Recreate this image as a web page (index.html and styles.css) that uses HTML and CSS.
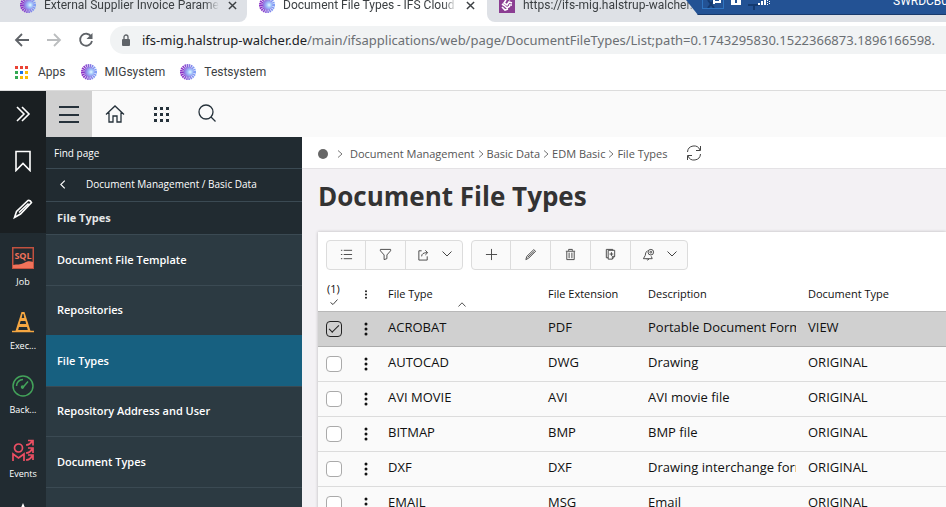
FILE: index.html
```html
<!DOCTYPE html>
<html lang="en">
<head>
  <meta charset="UTF-8">
  <meta name="viewport" content="width=device-width,initial-scale=1">
  <title>Document File Types - IFS Cloud</title>
  <link rel="stylesheet" href="styles.css">
</head>
<body>

  <!-- shared icons -->
  <svg class="sprite" aria-hidden="true">
    <defs>
      <linearGradient id="burst" x1="0" y1="0" x2="1" y2="0">
        <stop offset="0" stop-color="#8a2fc4"/>
        <stop offset="1" stop-color="#7f9df5"/>
      </linearGradient>
      <radialGradient id="core" cx=".65" cy=".5" r=".6">
        <stop offset="0" stop-color="#e4fbff"/>
        <stop offset=".4" stop-color="#a0c4fb"/>
        <stop offset="1" stop-color="#8f6fe0"/>
      </radialGradient>
    </defs>
    <symbol id="i-ifs" viewBox="0 0 16 16">
      <circle cx="8" cy="8" r="6" fill="none" stroke="url(#burst)" stroke-width="4" stroke-dasharray="1.35 .535"/>
      <circle cx="8.6" cy="8" r="5" fill="url(#core)"/>
    </symbol>
    <symbol id="i-x" viewBox="0 0 10 10"><path d="M1 1l8 8M9 1L1 9"/></symbol>
    <symbol id="i-down" viewBox="0 0 10 6"><path d="M.5 .5L5 5L9.500 .5"/></symbol>
    <symbol id="i-sep" viewBox="0 0 6 8"><path d="M1 .5L5 4L1 7.500"/></symbol>
    <symbol id="i-dots" viewBox="0 0 4 14">
      <circle cx="2" cy="2" r="1.500"/><circle cx="2" cy="7" r="1.500"/><circle cx="2" cy="12" r="1.500"/>
    </symbol>
  </svg>

  <div class="browser">
    <div class="tabs">
      <div class="tab tab-first">
        <svg class="fav"><use href="#i-ifs"/></svg>
        <span class="tab-title">External Supplier Invoice Parameters</span>
        <button class="tab-close" aria-label="Close tab"><svg><use href="#i-x"/></svg></button>
      </div>
      <div class="tab tab-active">
        <svg class="fav"><use href="#i-ifs"/></svg>
        <span class="tab-title">Document File Types - IFS Cloud</span>
        <button class="tab-close" aria-label="Close tab"><svg><use href="#i-x"/></svg></button>
      </div>
      <div class="tab tab-last">
        <svg class="fav" viewBox="0 0 16 16">
          <rect width="16" height="16" fill="#8b3d92"/>
          <path d="M7 3l-2 3 3 2 2-3 3 1M3 7l3 2 2 2 3-2M3 10l3 3 3-1M10 3l3-2M10 8l3 0" fill="none" stroke="#fff" stroke-width="1.600"/>
        </svg>
        <span class="tab-title">https://ifs-mig.halstrup-walcher.de</span>
      </div>
    </div>

    <div class="address-row">
      <button aria-label="Back"><svg viewBox="0 0 16 16"><path d="M15 8H2M8 2L2 8l6 6"/></svg></button>
      <button class="disabled" aria-label="Forward"><svg viewBox="0 0 16 16"><path d="M1 8h13M8 2l6 6-6 6"/></svg></button>
      <button aria-label="Reload"><svg viewBox="0 0 16 16"><path d="M13.200 4.500A6 6 0 1 0 14 9"/><path d="M14.500 1v6h-6z" fill="#5f6368" stroke="none"/></svg></button>
      <div class="address">
        <svg class="lock" viewBox="0 0 10 12"><rect x="1" y="5" width="8" height="7" rx="1"/><path d="M3 5V3a2 2 0 0 1 4 0v2" fill="none" stroke="#5f6368" stroke-width="1.300"/></svg>
        <span class="url"><b>ifs-mig.halstrup-walcher.de</b>/main/ifsapplications/web/page/DocumentFileTypes/List;path=0.1743295830.1522366873.1896166598.</span>
      </div>
    </div>

    <nav class="bookmarks">
      <a href="#">
        <svg class="apps" viewBox="0 0 13 13">
          <path fill="#ea4335" d="M0 0h3v3H0zM5 0h3v3H5zM10 0h3v3h-3z"/>
          <path fill="#34a853" d="M0 5h3v3H0zM0 10h3v3H0z"/>
          <path fill="#1a73e8" d="M5 5h3v3H5z"/>
          <path fill="#fbbc05" d="M10 5h3v3h-3zM5 10h3v3H5zM10 10h3v3h-3z"/>
        </svg>Apps</a>
      <a href="#"><svg class="fav"><use href="#i-ifs"/></svg>MIGsystem</a>
      <a href="#"><svg class="fav"><use href="#i-ifs"/></svg>Testsystem</a>
    </nav>

    <!-- remote session bar over the tab strip -->
    <div class="session">
      <span class="session-pin"><svg viewBox="0 0 20 8"><path d="M5 0l6 8M11 0L5 8" stroke="#143a70" stroke-width="2"/><path d="M11 0v4M11 2h6V0" fill="none" stroke="#fff" stroke-width="2"/></svg></span>
      <svg class="session-lock" viewBox="0 0 10 5"><path d="M0 0h10v5H0z" fill="#fff"/><path d="M4 0h2v3H4z" fill="#235294"/></svg>
      <svg class="session-signal" viewBox="0 0 22 10"><path d="M0 4h12v2H7v4H5V6H0z" fill="#143a70"/><path d="M10 3h2v2h-2zM13 1h2v4h-2zM16 0h2v5h-2zM19 0h1v1h-1zM19 2h1v1h-1zM19 4h1v1h-1zM21 1h1v1h-1zM21 3h1v1h-1z" fill="#fff"/></svg>
      <span class="session-name">SWRDCB01</span>
    </div>
  </div>

  <div class="app">
    <aside class="rail">
      <div class="rail-top">
        <button aria-label="Expand"><svg viewBox="0 0 16 16"><path d="M2 1l7 7-7 7M7 1l7 7-7 7"/></svg></button>
        <button aria-label="Bookmarks"><svg class="tall" viewBox="0 0 18 22"><path d="M2 1.500h14v19l-7-7-7 7z"/></svg></button>
        <button aria-label="Edit"><svg class="tall" viewBox="0 0 20 20"><path d="M1.500 18.500l2-6L15 1.500q2.500-.5 3.500 2L7.500 15zM6 13.500L15.500 4.500"/></svg></button>
      </div>
      <a class="rail-link" href="#">
        <svg viewBox="0 0 22 22"><rect x=".75" y=".75" width="20.500" height="20.500" fill="none" stroke="#c2513f" stroke-width="1.500"/><path d="M1 21v-3c4-1 7 0 11-2 3-2 6-2 9-1v6z" fill="#f0725a"/><text x="11" y="12" text-anchor="middle" class="sql">SQL</text></svg>
        Job</a>
      <a class="rail-link" href="#">
        <svg viewBox="0 0 22 22"><path d="M9.500 1h3l6 19h-15z" fill="#f5a742"/><path d="M0 20.500h22" stroke="#f5a742" stroke-width="1.500"/><path d="M10.500 3h1l.8 4H9.700zM8.600 10h4.800l.8 3H7.800zM7 16h8l.8 3H6.200z" fill="#212b31"/></svg>
        Exec...</a>
      <a class="rail-link" href="#">
        <svg viewBox="0 0 22 22" fill="none" stroke="#43a35a" stroke-width="1.500"><circle cx="11" cy="11" r="10"/><path d="M4.500 11A6.500 6.500 0 0 1 11 4.500M10 13.500L16 6.500"/><circle cx="10.500" cy="12" r="1"/></svg>
        Back...</a>
      <a class="rail-link" href="#">
        <svg viewBox="0 0 22 22" fill="none" stroke="#ec4f63" stroke-width="1.700"><circle cx="6.500" cy="9" r="4"/><path d="M1 22v-7l5.500 4 5.500-4v7M14 6q4 0 6-4M16 1.500h5v5M14 14q4 0 6-4M16 9h5v5M14 21q4 0 6-4M16 16h5v5"/></svg>
        Events</a>
      <a class="rail-link" href="#" aria-label="Favourites">
        <svg viewBox="0 0 22 22"><path d="M11 0l3 7 8 1-6 5 2 8-7-4-7 4 2-8-6-5 8-1z" fill="#fff"/></svg></a>
    </aside>

    <div class="workspace">
      <header class="topbar">
        <button class="pressed" aria-label="Menu"><svg viewBox="0 0 20 20"><path d="M0 3h20M0 11h20M0 18h20" stroke-width="2"/></svg></button>
        <button aria-label="Home"><svg viewBox="0 0 20 20"><path d="M1 10.500L10 2l9 8.500M4 8.500V18h4v-6h4v6h4V8.500"/></svg></button>
        <button aria-label="Applications"><svg viewBox="0 0 20 20"><path d="M2 2h4v4H2zM8 2h4v4H8zM14 2h4v4h-4zM2 8h4v4H2zM8 8h4v4H8zM14 8h4v4h-4zM2 14h4v4H2zM8 14h4v4H8zM14 14h4v4h-4z" transform="translate(.5 .5)" fill="#26323b" stroke="#fafafa" stroke-width="1"/></svg></button>
        <button aria-label="Search"><svg viewBox="0 0 20 20"><circle cx="9" cy="8" r="7"/><path d="M14 13l4.500 4.500"/></svg></button>
      </header>

      <div class="columns">
        <nav class="menu">
          <input class="find" type="text" placeholder="Find page" aria-label="Find page">
          <a class="menu-back" href="#"><svg viewBox="0 0 6 8"><path d="M5 .5L1.500 4L5 7.500"/></svg>Document Management / Basic Data</a>
          <h2>File Types</h2>
          <a class="menu-item" href="#">Document File Template</a>
          <a class="menu-item" href="#">Repositories</a>
          <a class="menu-item current" href="#">File Types</a>
          <a class="menu-item" href="#">Repository Address and User</a>
          <a class="menu-item" href="#">Document Types</a>
          <a class="menu-item" href="#"></a>
        </nav>

        <main>
          <div class="crumbs">
            <span class="root"></span>
            <svg class="sep"><use href="#i-sep"/></svg>
            <a class="first" href="#">Document Management</a>
            <svg class="sep"><use href="#i-sep"/></svg>
            <a href="#">Basic Data</a>
            <svg class="sep"><use href="#i-sep"/></svg>
            <a href="#">EDM Basic</a>
            <svg class="sep"><use href="#i-sep"/></svg>
            <a href="#">File Types</a>
            <button class="refresh" aria-label="Refresh"><svg viewBox="0 0 16 16"><path d="M1.500 7A6.500 6.500 0 0 1 14 5M14.500 1v4.500H10M14.500 9A6.500 6.500 0 0 1 2 11M1.500 15v-4.500H6"/></svg></button>
          </div>

          <h1>Document File Types</h1>

          <section class="card">
            <div class="toolbar">
              <div class="group">
                <button aria-label="List"><svg viewBox="0 0 14 14"><path d="M4 2.500h9M4 7h9M4 11.500h9M1 2.500h1.500M1 7h1.500M1 11.500h1.500"/></svg></button>
                <button aria-label="Filter"><svg viewBox="0 0 14 14"><path d="M1.500 1.500h11v1.500L8.500 7.500v4l-3 1v-5L1.500 3z"/></svg></button>
                <button class="wide" aria-label="Export"><svg viewBox="0 0 14 14"><path d="M5 3H2v10h9V9M5 9q0-4 6-4M9 2.500L11.500 5L9 7.500"/></svg><svg class="down"><use href="#i-down"/></svg></button>
              </div>
              <div class="group">
                <button aria-label="New"><svg viewBox="0 0 14 14"><path d="M7 1v12M1 7h12"/></svg></button>
                <button aria-label="Edit"><svg viewBox="0 0 14 14"><path d="M2 12.500l1-3.500 7.500-7.200 2 1.700L5 11zM4 10L11 3.500"/></svg></button>
                <button aria-label="Delete"><svg viewBox="0 0 14 14"><path d="M2 3.500h10M5 3V1.500h4V3M3 4v8.500h8V4M5.500 5v6M8.500 5v6"/></svg></button>
                <button aria-label="Duplicate"><svg viewBox="0 0 14 14"><path d="M4.500 2.500h7V9L9 12H4.500zM9 12V9h2.500M4.500 10.500H2.500v-9h7v1M8 4.500v4M6 6.500h4"/></svg></button>
                <button class="wide" aria-label="Notifications"><svg viewBox="0 0 14 14"><path d="M6 3Q3.500 4 3.500 8L1.500 11.500h9.500L10 9M5 12q1 2 2.500 0"/><circle cx="9.500" cy="4.500" r="3"/><circle cx="9.500" cy="4.500" r="1"/></svg><svg class="down"><use href="#i-down"/></svg></button>
              </div>
            </div>

            <table>
              <colgroup>
                <col class="c-check"><col class="c-dots"><col class="c-type"><col class="c-ext"><col class="c-desc"><col>
              </colgroup>
              <thead>
                <tr>
                  <th class="count">(1)<svg viewBox="0 0 8 6"><path d="M.5 3.500L3 5.500L7.500 .5"/></svg></th>
                  <th class="dots small"><svg><use href="#i-dots"/></svg></th>
                  <th class="sorted">File Type<svg viewBox="0 0 8 5"><path d="M.5 4.500L4 .8L7.500 4.500"/></svg></th>
                  <th>File Extension</th>
                  <th>Description</th>
                  <th>Document Type</th>
                </tr>
              </thead>
              <tbody>
                <tr class="selected">
                  <td><input type="checkbox" checked aria-label="Select ACROBAT"></td>
                  <td class="dots"><svg><use href="#i-dots"/></svg></td>
                  <td>ACROBAT</td><td>PDF</td><td><div class="clip">Portable Document Format</div></td><td>VIEW</td>
                </tr>
                <tr>
                  <td><input type="checkbox" aria-label="Select AUTOCAD"></td>
                  <td class="dots"><svg><use href="#i-dots"/></svg></td>
                  <td>AUTOCAD</td><td>DWG</td><td><div class="clip">Drawing</div></td><td>ORIGINAL</td>
                </tr>
                <tr>
                  <td><input type="checkbox" aria-label="Select AVI MOVIE"></td>
                  <td class="dots"><svg><use href="#i-dots"/></svg></td>
                  <td>AVI MOVIE</td><td>AVI</td><td><div class="clip">AVI movie file</div></td><td>ORIGINAL</td>
                </tr>
                <tr>
                  <td><input type="checkbox" aria-label="Select BITMAP"></td>
                  <td class="dots"><svg><use href="#i-dots"/></svg></td>
                  <td>BITMAP</td><td>BMP</td><td><div class="clip">BMP file</div></td><td>ORIGINAL</td>
                </tr>
                <tr>
                  <td><input type="checkbox" aria-label="Select DXF"></td>
                  <td class="dots"><svg><use href="#i-dots"/></svg></td>
                  <td>DXF</td><td>DXF</td><td><div class="clip">Drawing interchange format</div></td><td>ORIGINAL</td>
                </tr>
                <tr>
                  <td><input type="checkbox" aria-label="Select EMAIL"></td>
                  <td class="dots"><svg><use href="#i-dots"/></svg></td>
                  <td>EMAIL</td><td>MSG</td><td><div class="clip">Email</div></td><td>ORIGINAL</td>
                </tr>
              </tbody>
            </table>
          </section>
        </main>
      </div>
    </div>
  </div>

</body>
</html>
```
FILE: styles.css
```css
:root {
  --ink: #26323b;
  --rail: #212b31;
  --rail-dark: #1a1f22;
  --menu: #2c3a42;
  --menu-line: #3b4a53;
  --active: #176080;
  --line: #dcdcdc;
  --chrome: #dee1e6;
}
*, *::before, *::after { box-sizing: border-box; }
body {
  margin: 0;
  height: 100vh;
  display: flex;
  flex-direction: column;
  overflow: hidden;
  font-family: "Open Sans", "Noto Sans", sans-serif;
  font-size: 13px;
  color: #111;
  background: #fff;
}
button {
  padding: 0;
  border: none;
  background: none;
  color: inherit;
  font: inherit;
  display: flex;
  align-items: center;
  justify-content: center;
  cursor: pointer;
}
a { color: inherit; text-decoration: none; }
svg { display: block; flex: none; }
.sprite { position: absolute; width: 0; height: 0; }
.fav { width: 16px; height: 16px; }

/* Browser window */
.browser {
  flex: none;
  position: relative;
  border-bottom: 1px solid var(--line);
  font-family: Roboto, "Noto Sans", sans-serif;
  font-size: 12px;
  color: #3c4043;
}
.tabs {
  display: flex;
  align-items: flex-end;
  height: 22px;
  overflow: hidden;
}
.tab {
  display: flex;
  align-items: center;
  gap: 8px;
  flex: none;
  width: 240px;
  height: 34px;
  padding: 0 12px;
  background: var(--chrome);
}
.tab-first { width: 247px; padding: 0 10px 0 20px; border-radius: 0 0 8px 0; }
.tab-active { background: #fff; }
.tab-last { flex: 1; border-radius: 0 0 0 8px; }
.tab-title {
  flex: 1;
  max-width: 176px;
  overflow: hidden;
  white-space: nowrap;
  -webkit-mask-image: linear-gradient(90deg, #000 92%, transparent);
  mask-image: linear-gradient(90deg, #000 92%, transparent);
}
.tab-close { width: 10px; height: 16px; }
.tab-close svg { width: 9px; height: 9px; stroke: #3c4043; stroke-width: 1.600; }

.address-row {
  display: flex;
  align-items: center;
  gap: 16px;
  padding: 4px 0 0 14px;
}
.address-row button { width: 16px; height: 28px; }
.address-row button svg { width: 16px; height: 16px; fill: none; stroke: #5f6368; stroke-width: 1.800; }
.address-row .disabled svg { stroke: #bbbdbf; }
.address {
  flex: 1;
  min-width: 0;
  display: flex;
  align-items: center;
  gap: 11px;
  height: 28px;
  padding-left: 11px;
  border-radius: 14px 0 0 14px;
  background: #f1f3f4;
}
.lock { width: 10px; height: 12px; fill: #5f6368; }
.url {
  overflow: hidden;
  white-space: nowrap;
  font-family: "Noto Sans", sans-serif;
  font-size: 13px;
  color: #6b6f73;
}
.url b { font-weight: 400; color: #202124; }

.bookmarks {
  display: flex;
  align-items: center;
  gap: 15px;
  height: 36px;
  padding-left: 15px;
}
.bookmarks a { display: flex; align-items: center; gap: 8px; }
.apps { width: 13px; height: 13px; margin-right: 2px; }

.session {
  position: absolute;
  top: 0;
  right: 0;
  width: 260px;
  height: 15px;
  padding-left: 16px;
  display: flex;
  gap: 7px;
  overflow: hidden;
  background: #235294;
  border-bottom: 1px solid #183a6b;
  clip-path: polygon(0 0, 100% 0, 100% 100%, 12px 100%);
  color: #fff;
}
.session-pin {
  width: 22px;
  height: 9px;
  border: 1px solid #2f74c0;
  border-top: none;
}
.session-pin svg { width: 20px; height: 8px; }
.session-lock { width: 10px; height: 5px; }
.session-signal { width: 22px; height: 10px; }
.session-name { width: 53px; margin: -8px 0 0 auto; line-height: 18px; white-space: nowrap; }

/* Left icon rail */
.app { flex: 1; min-height: 0; display: flex; }
.rail {
  flex: none;
  width: 46px;
  overflow: hidden;
  background: var(--rail);
  color: #fff;
}
.rail-top { background: var(--rail-dark); margin-bottom: 14px; }
.rail-top button { width: 46px; height: 48px; }
.rail-top button:first-child { height: 46px; }
.rail-top svg { width: 16px; height: 16px; fill: none; stroke: #fff; stroke-width: 1.600; }
.rail-top .tall { width: 20px; height: 22px; }
.rail-link {
  display: flex;
  flex-direction: column;
  align-items: center;
  gap: 6px;
  height: 64px;
  font-size: 9px;
  line-height: 14px;
}
.rail-link svg { width: 22px; height: 22px; }
.sql { font: 700 9px "Open Sans", sans-serif; fill: #f0725a; }

/* Top bar */
.workspace { flex: 1; min-width: 0; display: flex; flex-direction: column; }
.topbar { display: flex; background: #fafafa; }
.topbar button { width: 46px; height: 46px; }
.topbar svg { width: 20px; height: 20px; fill: none; stroke: var(--ink); stroke-width: 1.300; }
.topbar .pressed { background: #d0d0d0; }

/* Navigation menu */
.columns { flex: 1; min-height: 0; display: flex; }
.menu {
  flex: none;
  width: 256px;
  overflow: hidden;
  background: var(--menu);
  color: #fff;
  font-size: 11px;
  font-weight: 600;
}
.find {
  display: block;
  width: 100%;
  height: 31px;
  padding: 0 8px;
  border: none;
  background: var(--rail);
  color: #fff;
  font: 400 10px "Open Sans", sans-serif;
}
.find::placeholder { color: #fff; opacity: 1; }
.menu-back {
  display: flex;
  align-items: center;
  gap: 20px;
  height: 33px;
  padding: 0 0 2px 13px;
  border-top: 1px solid var(--menu-line);
  background: var(--rail);
  font-size: 10px;
  font-weight: 500;
}
.menu-back svg { width: 7px; height: 9px; fill: none; stroke: #fff; }
.menu h2 {
  margin: 0;
  height: 33px;
  padding-left: 11px;
  border-top: 1px solid var(--menu-line);
  background: var(--rail);
  font-size: 11px;
  line-height: 32px;
  color: #e4e6e7;
}
.menu-item {
  display: flex;
  align-items: center;
  height: 51px;
  padding: 0 0 2px 11px;
  border-top: 1px solid var(--menu-line);
}
.menu-item:nth-of-type(odd) { height: 50px; }
.menu-item.current { border-top-color: var(--active); background: var(--active); }

/* Page */
main { flex: 1; min-width: 0; overflow: hidden; background: #f3f1f4; }
.crumbs {
  display: flex;
  align-items: center;
  gap: 3px;
  height: 32px;
  padding: 2px 0 0 16px;
  border-bottom: 1px solid #e4e2e5;
  background: #fff;
  color: #555;
  font-size: 11px;
  white-space: nowrap;
}
.root { width: 10px; height: 10px; margin-right: 6px; border-radius: 50%; background: #666; }
.sep { width: 6px; height: 8px; fill: none; stroke: #777; }
.crumbs .first { margin-left: 4px; }
.refresh { margin: 0 0 2px 16px; }
.refresh svg { width: 16px; height: 16px; fill: none; stroke: #444; }
h1 {
  margin: 0;
  padding: 10px 16px 18px;
  font-size: 26px;
  font-weight: 700;
  line-height: 35px;
  color: #333;
}
.card {
  margin-left: 16px;
  background: #fff;
  box-shadow: 0 0 3px rgba(0,0,0,.25);
}
.toolbar { display: flex; gap: 8px; padding: 8px; }
.group {
  display: flex;
  height: 30px;
  border: 1px solid var(--line);
  border-radius: 4px;
  background: #fafafa;
}
.group button { width: 40px; padding-bottom: 2px; }
.group button:first-child { width: 38px; }
.group button + button { border-left: 1px solid var(--line); }
.group .wide { width: 57px; gap: 12px; }
.group svg { width: 13px; height: 13px; fill: none; stroke: #444; }
.group .down { width: 10px; height: 6px; }

table { width: 100%; table-layout: fixed; border-collapse: collapse; }
.c-check { width: 40px; }
.c-dots { width: 30px; }
.c-type, .c-desc { width: 160px; }
.c-ext { width: 100px; }
th {
  position: relative;
  height: 33px;
  padding: 0 0 2px;
  text-align: left;
  font-size: 11px;
  font-weight: 400;
}
td {
  height: 35px;
  padding: 0 0 3px;
  border-top: 1px solid var(--line);
  line-height: 18px;
  vertical-align: middle;
}
tbody tr { background: #fafafa; }
tbody .selected { background: #d0d0d0; }
tbody .selected td { border-top-color: #b8b8b8; border-bottom: 1px solid #b0b0b0; }
td:first-child { padding: 0 0 0 8px; }
.count { padding-left: 9px; line-height: 13px; }
.count svg { width: 8px; height: 6px; margin: 4px 0 0 3px; fill: none; stroke: #444; }
.sorted svg {
  position: absolute;
  left: 70px;
  bottom: 4px;
  width: 8px;
  height: 5px;
  fill: none;
  stroke: #555;
}
.dots { padding: 0 0 0 6px; }
.dots svg { width: 4px; height: 14px; fill: #111; }
.small svg { width: 4px; height: 9px; }
.clip { width: 148px; overflow: hidden; white-space: nowrap; }
input[type="checkbox"] {
  appearance: none;
  display: grid;
  place-items: center;
  width: 16px;
  height: 16px;
  margin: 0;
  border: 1px solid #aaa;
  border-radius: 4px;
  background: #fff;
}
input[type="checkbox"]:checked { border-color: #222; background: transparent; }
input[type="checkbox"]:checked::after {
  content: "";
  width: 10px;
  height: 5px;
  margin-bottom: 3px;
  border: solid #222;
  border-width: 0 0 1px 1px;
  transform: rotate(-45deg);
}
```
